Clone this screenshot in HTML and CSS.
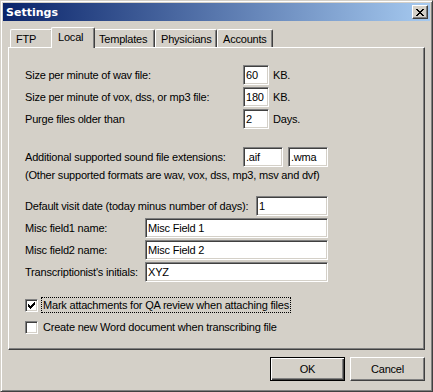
FILE: index.html
```html
<!DOCTYPE html>
<html lang="en">
<head>
    <meta charset="UTF-8">
    <title>Settings</title>
    <link rel="stylesheet" href="styles.css">
</head>
<body>

    <div class="window">
        <!-- Title bar -->
        <div class="titlebar">
            <span class="title">Settings</span>
            <button class="close" type="button">
                <svg width="8" height="7" viewBox="0 0 8 7" shape-rendering="crispEdges">
                    <path fill="#000" d="M0 0h2v1h-2z M6 0h2v1h-2z M1 1h2v1h-2z M5 1h2v1h-2z M2 2h4v1h-4z M3 3h2v1h-2z M2 4h4v1h-4z M1 5h2v1h-2z M5 5h2v1h-2z M0 6h2v1h-2z M6 6h2v1h-2z"/>
                </svg>
            </button>
        </div>

        <!-- Tabs -->
        <div class="tabs">
            <div class="tab tab-ftp">FTP</div>
            <div class="tab tab-local active">Local</div>
            <div class="tab tab-templates">Templates</div>
            <div class="tab tab-physicians">Physicians</div>
            <div class="tab tab-accounts">Accounts</div>
        </div>

        <!-- Local tab page -->
        <div class="panel">
            <div class="group">
                <div class="row">
                    <span class="lbl lbl-size">Size per minute of wav file:</span>
                    <input class="edit edit-small" type="text" value="60">
                    <span class="unit">KB.</span>
                </div>
                <div class="row">
                    <span class="lbl lbl-size">Size per minute of vox, dss, or mp3 file:</span>
                    <input class="edit edit-small" type="text" value="180">
                    <span class="unit">KB.</span>
                </div>
                <div class="row">
                    <span class="lbl lbl-size">Purge files older than</span>
                    <input class="edit edit-small" type="text" value="2">
                    <span class="unit">Days.</span>
                </div>
            </div>

            <div class="row row-ext">
                <span class="lbl lbl-size">Additional supported sound file extensions:</span>
                <input class="edit edit-ext" type="text" value=".aif">
                <input class="edit edit-ext" type="text" value=".wma">
            </div>
            <p class="note">(Other supported formats are wav, vox, dss, mp3, msv and dvf)</p>

            <div class="group group-fields">
                <div class="row">
                    <span class="lbl lbl-date">Default visit date (today minus number of days):</span>
                    <input class="edit edit-date" type="text" value="1">
                </div>
                <div class="row">
                    <span class="lbl lbl-misc">Misc field1 name:</span>
                    <input class="edit edit-misc" type="text" value="Misc Field 1">
                </div>
                <div class="row">
                    <span class="lbl lbl-misc">Misc field2 name:</span>
                    <input class="edit edit-misc" type="text" value="Misc Field 2">
                </div>
                <div class="row">
                    <span class="lbl lbl-misc">Transcriptionist's initials:</span>
                    <input class="edit edit-misc" type="text" value="XYZ">
                </div>
            </div>

            <div class="group group-checks">
                <div class="row">
                    <span class="check">
                        <svg width="7" height="7" viewBox="0 0 7 7" shape-rendering="crispEdges">
                            <path fill="#000" d="M6 0h1v1h-1z M5 1h2v1h-2z M0 2h1v1h-1z M4 2h3v1h-3z M0 3h2v1h-2z M3 3h3v1h-3z M0 4h5v1h-5z M1 5h3v1h-3z M2 6h1v1h-1z"/>
                        </svg>
                    </span>
                    <span class="check-text focused">Mark attachments for QA review when attaching files</span>
                </div>
                <div class="row">
                    <span class="check"></span>
                    <span class="check-text">Create new Word document when transcribing file</span>
                </div>
            </div>
        </div>

        <!-- Dialog buttons -->
        <div class="actions">
            <button class="btn btn-default" type="button">OK</button>
            <button class="btn" type="button">Cancel</button>
        </div>
    </div>

</body>
</html>
```

FILE: styles.css
```css
body {
    margin: 0;
    font-family: "Liberation Sans", Arial, sans-serif;
    font-size: 11px;
    letter-spacing: -0.2px;
    color: #000;
}
.window {
    box-sizing: border-box;
    width: 433px;
    height: 392px;
    background-color: #d4d0c8;
    border: 1px solid;
    border-color: #d4d0c8 #404040 #404040 #d4d0c8;
    box-shadow: inset 1px 1px #fff, inset -1px -1px #808080;
    padding: 2px;
    display: flex;
    flex-direction: column;
}
.titlebar {
    height: 18px;
    display: flex;
    align-items: center;
    justify-content: space-between;
    padding: 0 2px 0 3px;
    background: linear-gradient(to right, #0a246a, #a6caf0);
}
.title {
    color: white;
    font-family: "DejaVu Sans", sans-serif;
    font-weight: bold;
    font-size: 11px;
    letter-spacing: 0;
}
.close {
    box-sizing: border-box;
    width: 16px;
    height: 14px;
    padding: 0;
    background-color: #d4d0c8;
    border: 1px solid;
    border-color: #fff #404040 #404040 #fff;
    box-shadow: inset -1px -1px #808080;
    display: flex;
    align-items: center;
    justify-content: center;
}

/* tabs */
.tabs {
    display: flex;
    align-items: flex-end;
    height: 20px;
    margin: 6px 5px 0 7px;
}
.tab {
    box-sizing: border-box;
    height: 18px;
    padding-left: 5px;
    display: flex;
    align-items: center;
    background-color: #d4d0c8;
    border: 1px solid;
    border-color: #fff #404040 transparent #fff;
    border-bottom: none;
    border-top-left-radius: 2px;
    border-top-right-radius: 2px;
    box-shadow: inset -1px 0 #808080;
}
.tab-ftp { width: 43px; }
.tab-templates { width: 62px; }
.tab-physicians { width: 62px; }
.tab-accounts { width: 56px; }
.tab.active {
    position: relative;
    z-index: 1;
    width: 44px;
    height: 21px;
    margin: 0 -2px -1px;
    padding-left: 6px;
    padding-bottom: 2px;
}

/* tab page */
.panel {
    box-sizing: border-box;
    height: 303px;
    margin: 0 5px;
    border: 1px solid;
    border-color: #fff #404040 #404040 #fff;
    box-shadow: inset -1px -1px #808080;
    padding: 17px 0 0 16px;
}
.group {
    display: flex;
    flex-direction: column;
    gap: 2px;
}
.row {
    display: flex;
    align-items: center;
    height: 20px;
}
.lbl {
    flex-shrink: 0;
    white-space: nowrap;
}
.lbl-size { width: 218px; }
.lbl-date { width: 231px; }
.lbl-misc { width: 120px; }
.unit {
    margin-left: 4px;
}
.edit {
    box-sizing: border-box;
    height: 20px;
    margin: 0;
    padding: 0 2px;
    font: inherit;
    letter-spacing: inherit;
    color: #000;
    background-color: white;
    border: 1px solid;
    border-color: #808080 #fff #fff #808080;
    box-shadow: inset 1px 1px #404040, inset -1px -1px #d4d0c8;
    outline: none;
}
.edit-small { width: 26px; }
.edit-ext { width: 40px; margin-right: 5px; }
.edit-date { width: 72px; }
.edit-misc { width: 183px; }
.row-ext {
    margin-top: 18px;
}
.note {
    margin: 1px 0 0;
    height: 14px;
    line-height: 14px;
}
.group-fields {
    margin-top: 14px;
}
.group-checks {
    margin-top: 13px;
}
.check {
    box-sizing: border-box;
    width: 13px;
    height: 13px;
    display: flex;
    align-items: center;
    justify-content: center;
    background-color: white;
    border: 1px solid;
    border-color: #808080 #fff #fff #808080;
    box-shadow: inset 1px 1px #404040, inset -1px -1px #d4d0c8;
}
.check-text {
    margin-left: 3px;
    padding: 1px;
    border: 1px solid transparent;
}
.check-text.focused {
    border: 1px dotted #000;
}

/* dialog buttons */
.actions {
    display: flex;
    justify-content: flex-end;
    gap: 5px;
    margin: 7px 5px 0 0;
}
.btn {
    box-sizing: border-box;
    width: 75px;
    height: 24px;
    padding: 0;
    font: inherit;
    letter-spacing: inherit;
    color: #000;
    background-color: #d4d0c8;
    border: 1px solid;
    border-color: #fff #404040 #404040 #fff;
    box-shadow: inset -1px -1px #808080;
}
.btn-default {
    border-color: #000;
    box-shadow: inset 1px 1px #fff, inset -1px -1px #404040, inset -2px -2px #808080;
}
```
